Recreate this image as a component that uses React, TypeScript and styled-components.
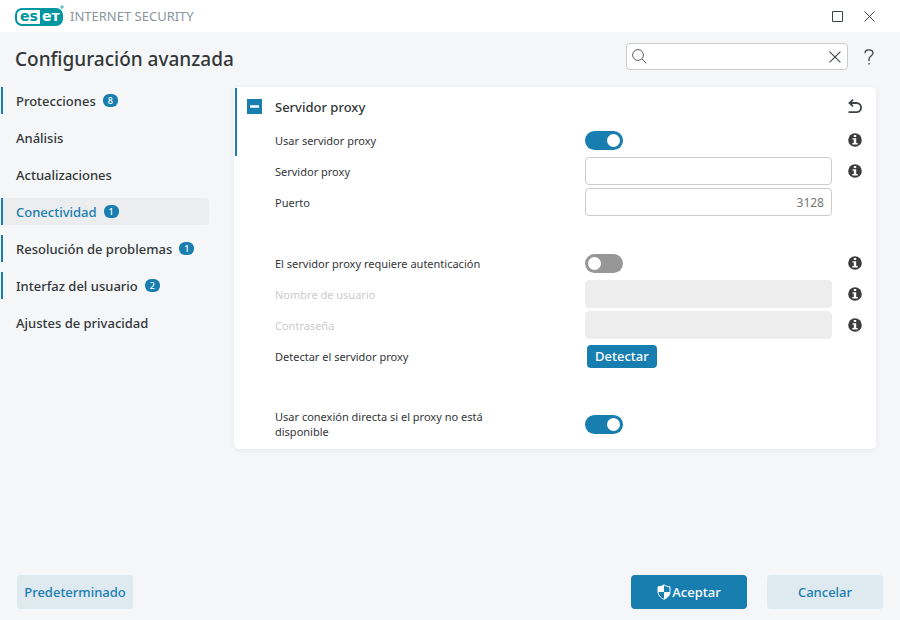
import React from "react";
import styled, { createGlobalStyle, css } from "styled-components";

const blue = "#187eb0";

const GlobalStyle = createGlobalStyle`
  *, *::before, *::after { box-sizing: border-box; }
  body { margin: 0; background: #f4f6f8; color: #333638; font: 12px/15px "Noto Sans", sans-serif; }
  button, input { font: inherit; color: inherit; }
`;

const Window = styled.div`
  display: flex;
  flex-direction: column;
  min-height: 100vh;
`;

const TitleBar = styled.header`
  display: flex;
  align-items: center;
  height: 32px;
  padding: 0 20px 0 15px;
  background: #fff;
`;

const Product = styled.span`
  margin-left: 6px;
  font-size: 13px;
  color: #8c959b;
`;

const WindowControls = styled.div`
  display: flex;
  gap: 10px;
  margin-left: auto;
`;

const IconButton = styled.button<{ $size?: number }>`
  display: grid;
  place-items: center;
  flex: none;
  width: ${(p) => p.$size ?? 22}px;
  height: ${(p) => p.$size ?? 22}px;
  padding: 0;
  border: 0;
  background: transparent;
  color: #3c4448;
`;

const Heading = styled.div`
  display: flex;
  align-items: center;
  height: 55px;
  padding: 0 20px 6px 15px;
`;

const Title = styled.h1`
  flex: 1;
  margin: 0;
  padding-top: 4px;
  font-size: 19px;
  line-height: 28px;
  font-weight: 500;
`;

const SearchBox = styled.div`
  display: flex;
  align-items: center;
  width: 222px;
  height: 27px;
  margin-right: 10px;
  padding: 0 2px 0 5px;
  border: 1px solid #ccc;
  border-radius: 4px;
  background: #fff;
  color: #5a6064;
`;

const SearchInput = styled.input`
  flex: 1;
  min-width: 0;
  border: 0;
  outline: 0;
  background: transparent;
`;

const Body = styled.div`
  display: flex;
  align-items: flex-start;
  gap: 25px;
  flex: 1;
  padding-right: 24px;
`;

const Nav = styled.nav`
  display: flex;
  flex-direction: column;
  flex: none;
  gap: 10px;
  width: 209px;
  padding-left: 1px;
`;

const NavLink = styled.a<{ $changed: boolean; $active: boolean }>`
  display: flex;
  align-items: center;
  gap: 7px;
  height: 27px;
  padding: 2px 0 0 13px;
  border-left: 2px solid ${(p) => (p.$changed ? blue : "transparent")};
  border-radius: 0 4px 4px 0;
  background: ${(p) => (p.$active ? "#ebedee" : "transparent")};
  color: ${(p) => (p.$active ? blue : "inherit")};
  font-size: 13px;
  font-weight: 500;
  text-decoration: none;
`;

const Badge = styled.span`
  width: 15px;
  height: 13px;
  margin-bottom: 2px;
  border-radius: 6px;
  background: ${blue};
  color: #fff;
  font-size: 9px;
  line-height: 13px;
  text-align: center;
`;

const Card = styled.main`
  flex: 1;
  min-width: 0;
  padding: 1px 0 2px 1px;
  border-radius: 5px;
  background: #fff;
  box-shadow: 0 1px 5px rgba(60, 80, 100, 0.08);
`;

const Group = styled.section<{ $changed?: boolean; $spaced?: boolean }>`
  margin-top: ${(p) => (p.$spaced ? 30 : 0)}px;
  border-left: 2px solid ${(p) => (p.$changed ? blue : "transparent")};
`;

const GroupHeader = styled.div`
  display: flex;
  align-items: center;
  height: 37px;
  padding: 0 10px;
`;

const Collapse = styled.button`
  display: grid;
  place-items: center;
  width: 15px;
  height: 15px;
  padding: 0;
  border: 0;
  background: ${blue};
  color: #fff;
`;

const GroupTitle = styled.h2`
  flex: 1;
  margin: 0 0 0 13px;
  font-size: 13px;
  line-height: 18px;
  font-weight: 500;
`;

const Row = styled.div`
  display: grid;
  grid-template-columns: 310px minmax(0, 1fr) 14px;
  column-gap: 16px;
  align-items: center;
  min-height: 31px;
  padding: 0 14px 1px 38px;
`;

const TallRow = styled(Row)`
  min-height: 45px;
`;

const Label = styled.label<{ $disabled?: boolean }>`
  padding-right: 90px;
  font-size: 11px;
  color: ${(p) => (p.$disabled ? "#ccc" : "inherit")};
`;

const Control = styled.div`
  display: flex;
  margin-left: -16px;
`;

const TextInput = styled.input<{ $numeric?: boolean }>`
  width: 100%;
  height: 28px;
  padding: 0 7px;
  border: 1px solid #ccc;
  border-radius: 4px;
  background: #fff;
  color: #777;
  ${(p) => p.$numeric && css`text-align: right;`}
  &:disabled { border-color: #ededed; background: #ededed; }
`;

const Switch = styled.input`
  appearance: none;
  display: flex;
  align-items: center;
  width: 38px;
  height: 19px;
  margin: 0;
  padding: 0 3px;
  border-radius: 10px;
  background: #979797;
  &::before {
    content: "";
    width: 13px;
    height: 13px;
    border-radius: 50%;
    background: #fff;
  }
  &:checked { justify-content: flex-end; background: ${blue}; }
`;

const SmallButton = styled.button`
  height: 23px;
  margin-left: 2px;
  padding: 0 8px;
  border: 0;
  border-radius: 4px;
  background: ${blue};
  color: #fff;
  font-size: 13px;
  font-weight: 500;
`;

const Footer = styled.footer`
  display: flex;
  gap: 20px;
  padding: 0 17px 11px;
`;

const ActionButton = styled.button<{ $primary?: boolean; $first?: boolean }>`
  display: flex;
  align-items: center;
  justify-content: center;
  gap: 1px;
  width: 116px;
  height: 34px;
  margin-right: ${(p) => (p.$first ? "auto" : 0)};
  padding: 0;
  border: 0;
  border-radius: 4px;
  background: ${(p) => (p.$primary ? blue : "#dfe9f0")};
  color: ${(p) => (p.$primary ? "#fff" : blue)};
  font-size: 13px;
  font-weight: 500;
`;

const Logo = () => (
  <svg width="49" height="22" viewBox="0 0 49 22" role="img" aria-label="ESET">
    <rect x="1" y="4" width="46" height="16" rx="6" fill="#fff" stroke="#0096a1" strokeWidth="2" />
    <path d="M25 4h16a6 6 0 0 1 6 6v4a6 6 0 0 1-6 6H25z" fill="#0096a1" />
    <text x="5" y="16" fontFamily="DejaVu Sans, sans-serif" fontWeight="700" fontSize="14" fill="#0096a1">es</text>
    <text x="27" y="16" fontFamily="DejaVu Sans, sans-serif" fontWeight="700" fontSize="14" fill="#fff">eт</text>
    <circle cx="47" cy="2" r="1.2" fill="none" stroke="#0096a1" strokeWidth=".8" />
  </svg>
);

const Cross = ({ size }: { size: number }) => (
  <svg width={size} height={size} viewBox="0 0 11 11" fill="none" stroke="currentColor" aria-hidden="true">
    <path d="M.5.5l10 10M10.5.5l-10 10" />
  </svg>
);

const InfoIcon = () => (
  <svg width="14" height="14" viewBox="0 0 14 14" aria-hidden="true">
    <circle cx="7" cy="7" r="6.8" fill="#3c3c3c" />
    <path d="M5.8 2h2.400v2H5.800zM4.500 5.200h3.700v4.800h1.500v1.500H4.300V10h1.500V6.600H4.500z" fill="#fff" />
  </svg>
);

const Shield = () => (
  <svg width="14" height="16" viewBox="0 0 14 16" aria-hidden="true">
    <path d="M7 .8C5.300 2.100 3.300 2.700 1 2.800V7.500c0 3.500 2.200 6 6 7.800 3.800-1.800 6-4.300 6-7.800V2.800C10.700 2.700 8.700 2.100 7 .8z" fill="none" stroke="#fff" />
    <path d="M7 .8V8H1V2.800C3.300 2.700 5.300 2.100 7 .8zM7 8h6c-.2 3.200-2.300 5.600-6 7.300z" fill="#fff" />
  </svg>
);

const navItems = [
  { label: "Protecciones", count: 8 },
  { label: "Análisis" },
  { label: "Actualizaciones" },
  { label: "Conectividad", count: 1, active: true },
  { label: "Resolución de problemas", count: 1 },
  { label: "Interfaz del usuario", count: 2 },
  { label: "Ajustes de privacidad" },
];

const Info = () => (
  <IconButton $size={14} aria-label="Información">
    <InfoIcon />
  </IconButton>
);

export default function App() {
  return (
    <Window>
      <GlobalStyle />
      <TitleBar>
        <Logo />
        <Product>INTERNET SECURITY</Product>
        <WindowControls>
          <IconButton aria-label="Maximizar">
            <svg width="11" height="11" fill="none" stroke="currentColor"><path d="M.5.5h10v10H.5z" /></svg>
          </IconButton>
          <IconButton aria-label="Cerrar"><Cross size={11} /></IconButton>
        </WindowControls>
      </TitleBar>
      <Heading>
        <Title>Configuración avanzada</Title>
        <SearchBox>
          <svg width="15" height="15" viewBox="0 0 15 15" fill="none" stroke="currentColor" aria-hidden="true">
            <circle cx="6" cy="6" r="5.400" />
            <path d="M10 10l4.300 4.300" />
          </svg>
          <SearchInput aria-label="Buscar" />
          <IconButton $size={20} aria-label="Borrar"><Cross size={12} /></IconButton>
        </SearchBox>
        <IconButton aria-label="Ayuda">
          <svg width="10" height="16" viewBox="0 0 10 16" fill="none" stroke="currentColor" strokeWidth="1.300" aria-hidden="true">
            <path d="M1 4.200C1 2 2.600.8 4.900.8S9 2.100 9 4.100C9 7 5 7 5 10v2" />
            <path d="M5 14v1.500" />
          </svg>
        </IconButton>
      </Heading>
      <Body>
        <Nav>
          {navItems.map((item) => (
            <NavLink key={item.label} href="#" $changed={!!item.count} $active={!!item.active}>
              {item.label}
              {item.count && <Badge>{item.count}</Badge>}
            </NavLink>
          ))}
        </Nav>
        <Card>
          <Group $changed>
            <GroupHeader>
              <Collapse aria-label="Contraer">
                <svg width="9" height="3"><path d="M0 1.500h9" stroke="currentColor" strokeWidth="2.500" /></svg>
              </Collapse>
              <GroupTitle>Servidor proxy</GroupTitle>
              <IconButton aria-label="Restablecer">
                <svg width="14" height="15" viewBox="0 0 14 15" fill="none" stroke="currentColor" strokeWidth="1.800" aria-hidden="true">
                  <path d="M1.500 4H8.500a4.600 4.600 0 0 1 0 9.200H.5M5 .7L1.500 4 5 7.300" />
                </svg>
              </IconButton>
            </GroupHeader>
            <Row>
              <Label htmlFor="use">Usar servidor proxy</Label>
              <Control><Switch id="use" type="checkbox" role="switch" defaultChecked /></Control>
              <Info />
            </Row>
          </Group>
          <Group>
            <Row>
              <Label htmlFor="server">Servidor proxy</Label>
              <Control><TextInput id="server" type="text" /></Control>
              <Info />
            </Row>
            <Row>
              <Label htmlFor="port">Puerto</Label>
              <Control><TextInput id="port" type="text" $numeric defaultValue="3128" /></Control>
            </Row>
          </Group>
          <Group $spaced>
            <Row>
              <Label htmlFor="auth">El servidor proxy requiere autenticación</Label>
              <Control><Switch id="auth" type="checkbox" role="switch" /></Control>
              <Info />
            </Row>
            <Row>
              <Label htmlFor="user" $disabled>Nombre de usuario</Label>
              <Control><TextInput id="user" type="text" disabled /></Control>
              <Info />
            </Row>
            <Row>
              <Label htmlFor="password" $disabled>Contraseña</Label>
              <Control><TextInput id="password" type="password" disabled /></Control>
              <Info />
            </Row>
            <Row>
              <Label htmlFor="detect">Detectar el servidor proxy</Label>
              <Control><SmallButton id="detect">Detectar</SmallButton></Control>
            </Row>
          </Group>
          <Group $spaced>
            <TallRow>
              <Label htmlFor="direct">Usar conexión directa si el proxy no está disponible</Label>
              <Control><Switch id="direct" type="checkbox" role="switch" defaultChecked /></Control>
            </TallRow>
          </Group>
        </Card>
      </Body>
      <Footer>
        <ActionButton $first>Predeterminado</ActionButton>
        <ActionButton $primary><Shield />Aceptar</ActionButton>
        <ActionButton>Cancelar</ActionButton>
      </Footer>
    </Window>
  );
}
